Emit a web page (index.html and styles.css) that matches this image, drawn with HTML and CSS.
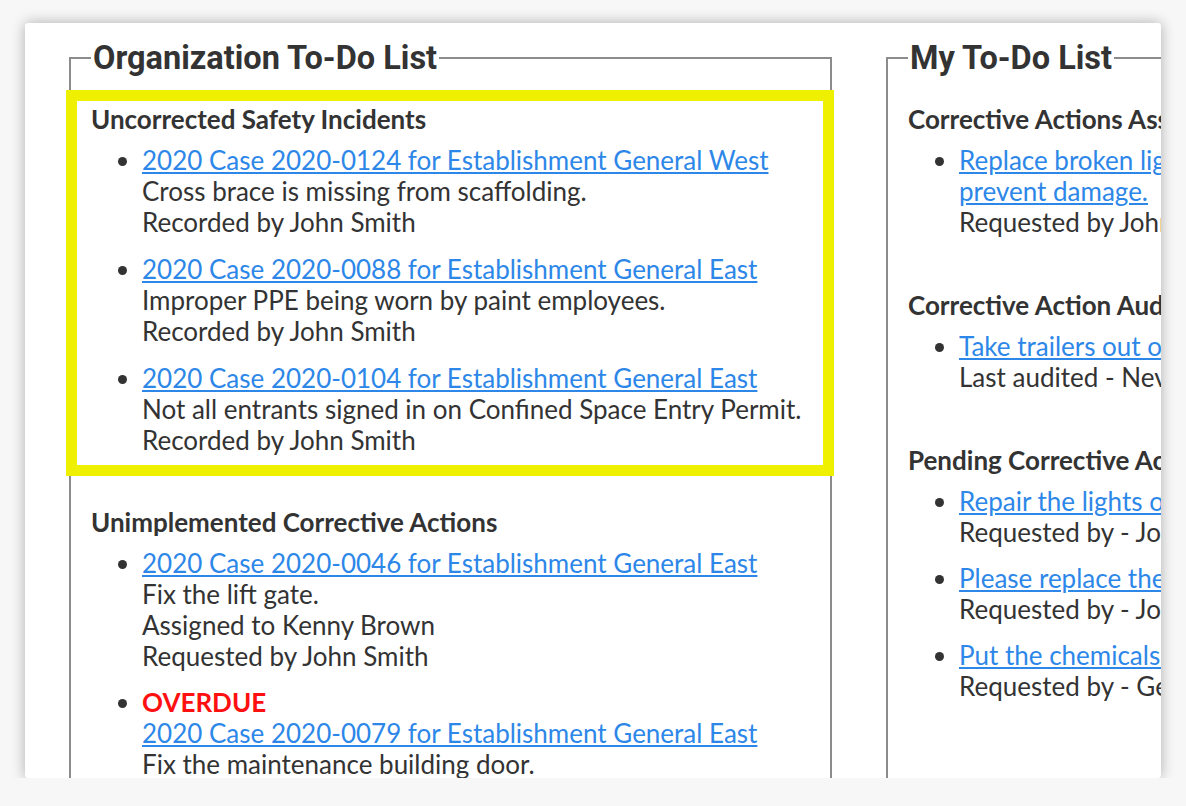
FILE: index.html
```html
<!DOCTYPE html>
<html lang="en">
<head>
    <meta charset="UTF-8">
    <meta name="viewport" content="width=device-width, initial-scale=1.0">
    <title>To-Do Lists</title>
    <link rel="stylesheet" href="styles.css">
</head>
<body>
    <div class="card">
        <div class="columns">
            <fieldset class="todo">
                <legend>Organization To-Do List</legend>
                <div class="section highlight">
                    <h3>Uncorrected Safety Incidents</h3>
                    <ul>
                        <li>
                            <a href="#">2020 Case 2020-0124 for Establishment General West</a><br>
                            Cross brace is missing from scaffolding.<br>
                            Recorded by John Smith
                        </li>
                        <li>
                            <a href="#">2020 Case 2020-0088 for Establishment General East</a><br>
                            Improper PPE being worn by paint employees.<br>
                            Recorded by John Smith
                        </li>
                        <li>
                            <a href="#">2020 Case 2020-0104 for Establishment General East</a><br>
                            Not all entrants signed in on Confined Space Entry Permit.<br>
                            Recorded by John Smith
                        </li>
                    </ul>
                </div>
                <div class="section">
                    <h3>Unimplemented Corrective Actions</h3>
                    <ul>
                        <li>
                            <a href="#">2020 Case 2020-0046 for Establishment General East</a><br>
                            Fix the lift gate.<br>
                            Assigned to Kenny Brown<br>
                            Requested by John Smith
                        </li>
                        <li>
                            <span class="overdue">OVERDUE</span><br>
                            <a href="#">2020 Case 2020-0079 for Establishment General East</a><br>
                            Fix the maintenance building door.<br>
                            Assigned to Kenny Brown<br>
                            Requested by John Smith
                        </li>
                    </ul>
                </div>
            </fieldset>

            <fieldset class="todo">
                <legend>My To-Do List</legend>
                <div class="section">
                    <h3>Corrective Actions Assigned to Me</h3>
                    <ul>
                        <li>
                            <a href="#">Replace broken light fixtures in the north stairwell to prevent damage.</a><br>
                            Requested by John Smith
                        </li>
                    </ul>
                </div>
                <div class="section">
                    <h3>Corrective Action Audits</h3>
                    <ul>
                        <li>
                            <a href="#">Take trailers out of the fire lane</a><br>
                            Last audited - Never
                        </li>
                    </ul>
                </div>
                <div class="section">
                    <h3>Pending Corrective Actions</h3>
                    <ul>
                        <li>
                            <a href="#">Repair the lights on the loading dock</a><br>
                            Requested by - John Smith
                        </li>
                        <li>
                            <a href="#">Please replace the exit sign bulbs</a><br>
                            Requested by - John Smith
                        </li>
                        <li>
                            <a href="#">Put the chemicals back in the cabinet</a><br>
                            Requested by - George Miller
                        </li>
                    </ul>
                </div>
            </fieldset>
        </div>
    </div>
</body>
</html>
```

FILE: styles.css
```css
body {
    margin: 0;
    background: #f7f7f7;
    font-family: Lato, "Open Sans", sans-serif;
    color: #333;
}
.card {
    margin: 23px 0 0 25px;
    width: 1136px;
    height: 755px;
    background: #fff;
    border-radius: 3px;
    box-shadow: 0 0 14px rgba(0, 0, 0, 0.3);
    overflow: hidden;
}
.columns {
    display: flex;
    gap: 54px;
    padding: 16px 0 0 44px;
}
.todo {
    flex: 0 0 763px;
    box-sizing: border-box;
    margin: 0;
    padding: 0 0 40px;
    border: 2px solid #8c8c8c;
    min-inline-size: 0;
}
.todo legend {
    margin-left: 20px;
    padding: 0 2px;
    font-family: Roboto, sans-serif;
    font-weight: bold;
    font-size: 32.5px;
    line-height: 38px;
    color: #333;
}
.section {
    padding: 0 20px;
    margin-bottom: 52px;
    font-size: 26px;
    line-height: 31px;
}
.todo > .section:first-of-type {
    margin-top: 27px;
}
.todo > .highlight:first-of-type {
    margin: 13px -4px 31px -5px;
    border: 11px solid #eef000;
    padding: 3px 14px 9px;
}
h3 {
    margin: 0 0 10px;
    font-size: 26px;
    line-height: 31px;
    font-weight: bold;
}
ul {
    margin: 0;
    padding-left: 51px;
}
li + li {
    margin-top: 15px;
}
.highlight li + li {
    margin-top: 16px;
}
a {
    color: #2d87e8;
}
.overdue {
    color: #ff1010;
    font-weight: bold;
}
```
